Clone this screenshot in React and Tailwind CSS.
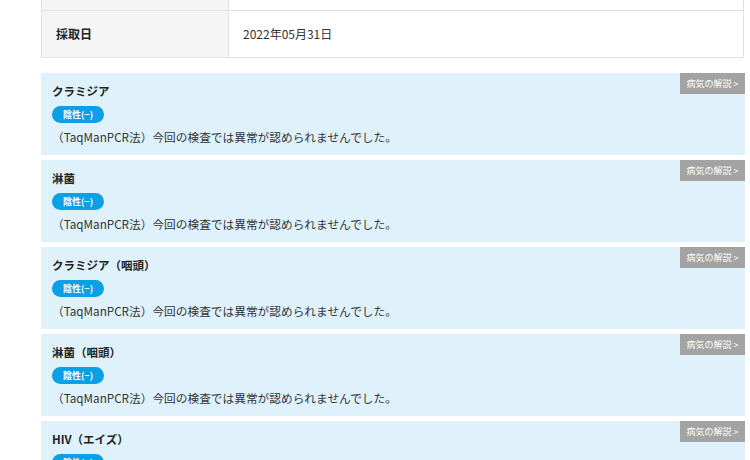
const ITEMS = [
  'クラミジア',
  '淋菌',
  'クラミジア（咽頭）',
  '淋菌（咽頭）',
  'HIV（エイズ）',
];

const ResultCard = ({ name }) => (
  <div className="relative h-[82px] bg-[#dff2fc] px-[11px] pt-[10px]">
    <div className="absolute right-0 top-0 flex h-[21px] w-[65px] items-center justify-center bg-[#a3a3a3] text-[9px] text-white">
      病気の解説 &gt;
    </div>
    <div className="text-[11.5px] font-bold leading-[17px] text-[#222]">{name}</div>
    <div className="mt-[6px] flex h-[17px] w-[52px] items-center justify-center rounded-full bg-[#0aa0e3] text-[9px] font-bold text-white">
      陰性(−)
    </div>
    <div className="mt-[5px] text-[11.7px] leading-[17px] text-[#333]">
      （TaqManPCR法）今回の検査では異常が認められませんでした。
    </div>
  </div>
);

export default function App() {
  return (
    <div
      className="h-[460px] w-[750px] overflow-hidden bg-white pl-[41px] pr-[5px]"
      style={{ fontFamily: '"Noto Sans CJK JP", "Noto Sans", sans-serif' }}
    >
      <div className="mr-[1px] border-x border-b border-[#e2e2e2]">
        <div className="flex h-[11px] border-b border-[#e2e2e2]">
          <div className="w-[187px] border-r border-[#e2e2e2] bg-[#f5f5f5]" />
          <div className="flex-1" />
        </div>
        <div className="flex h-[46px] items-center">
          <div className="flex h-full w-[187px] items-center border-r border-[#e2e2e2] bg-[#f5f5f5] pl-[14px] text-[12px] font-bold text-[#222]">
            採取日
          </div>
          <div className="pl-[14px] text-[12px] text-[#333]">2022年05月31日</div>
        </div>
      </div>
      <div className="mt-[15px] flex flex-col gap-[5px]">
        {ITEMS.map((n) => (
          <ResultCard key={n} name={n} />
        ))}
      </div>
    </div>
  );
}
